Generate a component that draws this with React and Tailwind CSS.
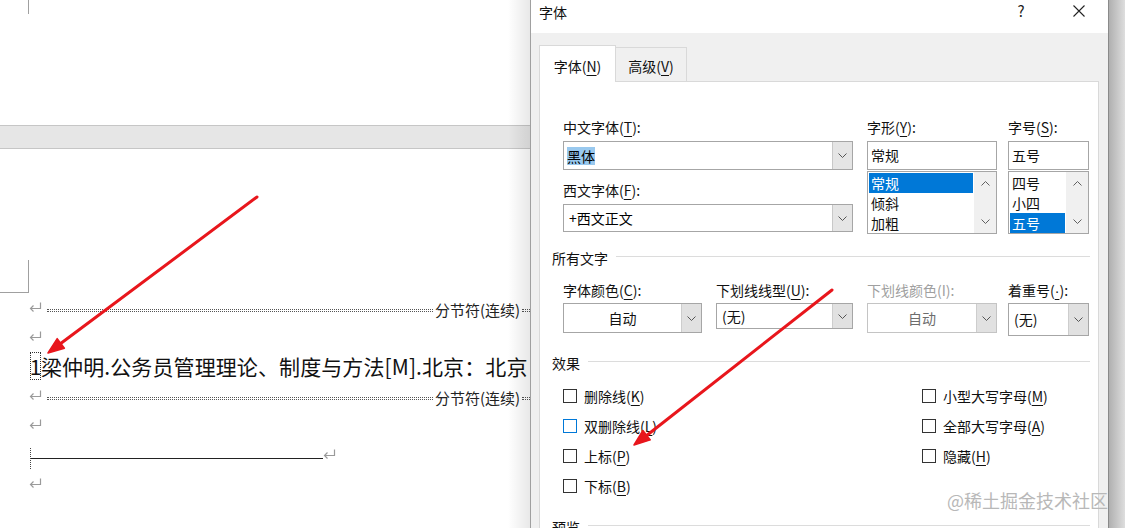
import React from 'react'

const font = "font-['Noto_Sans_CJK_SC',sans-serif]"

function Ret({ className = '' }) {
  return (
    <svg width="13" height="11" viewBox="0 0 13 11" className={`shrink-0 ${className}`}>
      <path d="M11.5 0.5 V6.5 H1.5" fill="none" stroke="#9a9a9a" strokeWidth="1.2" />
      <path d="M4.5 3.5 L1.5 6.5 L4.5 9.5" fill="none" stroke="#9a9a9a" strokeWidth="1.2" />
    </svg>
  )
}

function Chevron({ up = false, color = '#555' }) {
  return (
    <svg width="9" height="5" viewBox="0 0 9 5">
      <path d={up ? 'M0.5 4.5 L4.5 0.5 L8.5 4.5' : 'M0.5 0.5 L4.5 4.5 L8.5 0.5'} fill="none" stroke={color} strokeWidth="1" />
    </svg>
  )
}

function Dots({ className = '' }) {
  return <div className={`h-[3px] border-y border-dotted border-[#555] ${className}`} />
}

function Label({ text, k, tail = '):', gray = false }) {
  return (
    <div className={`h-[20px] leading-[20px] text-[14px] ${gray ? 'text-[#a0a0a0]' : 'text-[#111]'}`}>
      {text}(<u className="underline-offset-[3px]">{k}</u>{tail}
    </div>
  )
}

function Combo({ children, h = 'h-[29px]' }) {
  return (
    <div className={`flex ${h} border border-[#a6a6a6] bg-white mt-[4px]`}>
      <div className="flex-1 flex items-center pl-[2px] text-[14px]">{children}</div>
      <div className="w-[20px] bg-[#e5e5e5] border-l border-[#c8c8c8] flex items-center justify-center">
        <Chevron />
      </div>
    </div>
  )
}

function ListBox({ items, selected, pad = 'pl-[2px]' }) {
  return (
    <div className="flex h-[63px] border border-[#a6a6a6] bg-white mt-[1px]">
      <div className="flex-1 p-px">
        {items.map((it) => (
          <div
            key={it}
            className={`h-[20px] leading-[20px] text-[14px] ${pad} ${it === selected ? 'bg-[#0078d7] text-white' : 'text-[#111]'}`}
          >
            {it}
          </div>
        ))}
      </div>
      <div className="w-[22px] bg-[#f0f0f0] flex flex-col items-center justify-between py-[9px]">
        <Chevron up color="#606060" />
        <Chevron color="#606060" />
      </div>
    </div>
  )
}

function Drop({ w, h, value, center = false, disabled = false, ml = '' }) {
  return (
    <div className={`${w} ${ml}`}>
      <div className={`flex ${h} border ${disabled ? 'border-[#c4c4c4]' : 'border-[#a6a6a6]'} bg-white`}>
        <div
          className={`flex-1 flex items-center text-[14px] ${center ? 'justify-center' : 'pl-[5px]'} ${disabled ? 'text-[#6d6d6d]' : 'text-[#111]'}`}
        >
          {value}
        </div>
        <div className="w-[20px] bg-[#e1e1e1] border-l border-[#cdcdcd] flex items-center justify-center">
          <Chevron />
        </div>
      </div>
    </div>
  )
}

function Check({ label, k, blue = false }) {
  return (
    <div className="h-[30px] flex items-center">
      <div className={`w-[14px] h-[14px] border bg-white ${blue ? 'border-[#0078d7]' : 'border-[#333]'}`} />
      <div className="ml-[7px] text-[14px] leading-[20px] text-[#111]">
        {label}(<u className="underline-offset-[3px]">{k}</u>)
      </div>
    </div>
  )
}

function Section({ title, className = '' }) {
  return (
    <div className={`flex items-center h-[20px] ${className}`}>
      <span className="text-[14px] leading-[20px] text-[#111]">{title}</span>
      <div className="flex-1 ml-[8px] h-px bg-[#dcdcdc] -mt-[3px]" />
    </div>
  )
}

function Doc() {
  return (
    <div className="relative w-[530px] shrink-0 h-full overflow-hidden bg-white flex flex-col">
      <div className="h-[125px] shrink-0">
        <div className="ml-[28px] w-px h-[14px] bg-[#a0a0a0]" />
      </div>
      <div className="h-[24px] shrink-0 bg-[#e6e6e6] border-y border-[#c6c6c6]" />
      <div className="flex-1 bg-white">
        <div className="mt-[111px] w-[29px] h-[33px] border-r border-b border-[#a0a0a0]" />
        <div className="flex flex-col whitespace-nowrap">
          <div className="h-[29.3px] flex items-center pl-[29px] w-[700px]">
            <Ret />
            <Dots className="ml-[5px] w-[386px] mt-[6px]" />
            <span className="text-[15px] leading-[20px] text-[#222] mx-[2px] mt-[4px]">分节符(连续)</span>
            <Dots className="w-[100px] mt-[6px]" />
          </div>
          <div className="h-[29.3px] flex items-center pl-[29px]">
            <Ret />
          </div>
          <div className="h-[29.3px] flex items-center pl-[30px]">
            <span className="border border-dotted border-[#333] h-[28px] w-[11px] flex items-center justify-center text-[21px] leading-[28px] text-[#111]">
              1
            </span>
            <span className="text-[21px] leading-[28px] text-[#111] tracking-[0.1px]">梁仲明.公务员管理理论、制度与方法[M].北京：北京</span>
          </div>
          <div className="h-[29.3px] flex items-center pl-[29px] w-[700px]">
            <Ret />
            <Dots className="ml-[5px] w-[386px] mt-[6px]" />
            <span className="text-[15px] leading-[20px] text-[#222] mx-[2px] mt-[4px]">分节符(连续)</span>
            <Dots className="w-[100px] mt-[6px]" />
          </div>
          <div className="h-[29.3px] flex items-center pl-[29px]">
            <Ret />
          </div>
          <div className="h-[29.3px] flex items-center pl-[30px]">
            <div className="w-[293px] h-[21px] mt-[9px] border-l border-dotted border-[#444] flex items-center">
              <div className="flex-1 h-px bg-[#222]" />
            </div>
            <Ret />
          </div>
          <div className="h-[29.3px] flex items-center pl-[29px]">
            <Ret />
          </div>
        </div>
      </div>
      <div className="absolute right-0 top-0 h-full w-[22px] bg-linear-to-r from-[rgba(0,0,0,0)] to-[rgba(0,0,0,0.09)]" />
    </div>
  )
}

function Dialog() {
  return (
    <div className="w-[579px] shrink-0 h-full flex flex-col border-l border-[#a0a0a0] border-r border-r-[#8a8a8a] bg-[#f0f0f0]">
      <div className="h-[33px] shrink-0 bg-white flex items-center">
        <span className="pl-[8px] text-[14px] leading-[20px] text-[#111] -mt-[10px]">字体</span>
        <div className="ml-auto w-[46px] text-center text-[15px] text-[#222] -mt-[10px]">?</div>
        <div className="w-[46px] ml-[12px] mr-[6px] flex justify-center -mt-[12px]">
          <svg width="12" height="12" viewBox="0 0 12 12">
            <path d="M0.5 0.5 L11.5 11.5 M11.5 0.5 L0.5 11.5" stroke="#222" strokeWidth="1.1" />
          </svg>
        </div>
      </div>
      <div className="flex-1 pl-[8px] pr-[9px] pt-[12px] flex flex-col">
        <div className="flex items-end h-[36px]">
          <div className="relative z-10 w-[77px] h-[37px] -mb-px bg-white border border-b-0 border-[#d9d9d9] pt-[10px] text-center text-[14px] leading-[20px] text-[#111]">
            字体(<u className="underline-offset-[3px]">N</u>)
          </div>
          <div className="w-[71px] h-[34px] border border-l-0 border-b-0 border-[#d9d9d9] pt-[8px] text-center text-[14px] leading-[20px] text-[#111]">
            高级(<u className="underline-offset-[3px]">V</u>)
          </div>
        </div>
        <div className="flex-1 bg-white border border-[#d9d9d9] pl-[12px] pr-[8px] pt-[35px]">
          <div className="pl-[11px] flex">
            <div className="w-[290px]">
              <Label text="中文字体" k="T" />
              <Combo>
                <span className="bg-[#99c9ef] leading-[18px] ml-px">黑体</span>
              </Combo>
              <div className="mt-[10px]">
                <Label text="西文字体" k="F" />
              </div>
              <div className="mt-[2px]">
                <Combo h="h-[28px]">
                  <span className="ml-[3px]">+西文正文</span>
                </Combo>
              </div>
            </div>
            <div className="w-[130px] ml-[14px]">
              <Label text="字形" k="Y" />
              <div className="flex h-[29px] border border-[#a6a6a6] bg-white mt-[4px] items-center pl-[3px] text-[14px] text-[#111]">常规</div>
              <ListBox items={['常规', '倾斜', '加粗']} selected="常规" />
            </div>
            <div className="w-[81px] ml-[11px]">
              <Label text="字号" k="S" />
              <div className="flex h-[29px] border border-[#a6a6a6] bg-white mt-[4px] items-center pl-[3px] text-[14px] text-[#111]">五号</div>
              <ListBox items={['四号', '小四', '五号']} selected="五号" />
            </div>
          </div>

          <Section title="所有文字" className="mt-[14px]" />
          <div className="pl-[11px] flex items-start mt-[12px]">
            <div className="w-[139px]">
              <Label text="字体颜色" k="C" />
            </div>
            <div className="w-[137px] ml-[14px]">
              <Label text="下划线线型" k="U" />
            </div>
            <div className="w-[130px] ml-[14px]">
              <div className="h-[20px] leading-[20px] text-[14px] text-[#a0a0a0]">下划线颜色(I):</div>
            </div>
            <div className="w-[81px] ml-[11px]">
              <div className="h-[20px] leading-[20px] text-[14px] text-[#111]">
                着重号(<u className="underline-offset-[3px] font-['Liberation_Sans',sans-serif]">·</u>):
              </div>
            </div>
          </div>
          <div className="pl-[11px] flex items-start mt-[3px] h-[33px]">
            <Drop w="w-[139px]" h="h-[30px]" value="自动" center />
            <Drop w="w-[137px]" h="h-[26px]" value="(无)" ml="ml-[14px]" />
            <Drop w="w-[130px]" h="h-[30px]" value="自动" center disabled ml="ml-[14px]" />
            <Drop w="w-[81px]" h="h-[33px]" value="(无)" ml="ml-[11px]" />
          </div>

          <Section title="效果" className="mt-[17px]" />
          <div className="pl-[11px] flex mt-[8px]">
            <div className="w-[359px]">
              <Check label="删除线" k="K" />
              <Check label="双删除线" k="L" blue />
              <Check label="上标" k="P" />
              <Check label="下标" k="B" />
            </div>
            <div>
              <Check label="小型大写字母" k="M" />
              <Check label="全部大写字母" k="A" />
              <Check label="隐藏" k="H" />
            </div>
          </div>
          <Section title="预览" className="mt-[16px]" />
        </div>
      </div>
    </div>
  )
}

export default function App() {
  return (
    <div className={`relative w-[1125px] h-[528px] overflow-hidden flex ${font}`}>
      <Doc />
      <Dialog />
      <div className="flex-1 h-full bg-linear-to-r from-[#b0b0b0] to-[#dedede]" />

      <svg className="absolute inset-0 pointer-events-none" width="1125" height="528">
        <g stroke="#e8161c" strokeWidth="3" strokeLinecap="round" fill="#e8161c">
          <line x1="257" y1="197" x2="60" y2="344" />
          <polygon points="48,353 64.4,348.2 57.2,338.6" strokeWidth="1.5" strokeLinejoin="round" />
          <line x1="832" y1="290" x2="646" y2="436" />
          <polygon points="634,445 650.3,439.9 642.9,430.5" strokeWidth="1.5" strokeLinejoin="round" />
        </g>
      </svg>

      <div className="absolute left-[947px] top-[488px] text-[18px] leading-[24px] text-[#b8b8b8] whitespace-nowrap">
        @稀土掘金技术社区
      </div>
    </div>
  )
}
